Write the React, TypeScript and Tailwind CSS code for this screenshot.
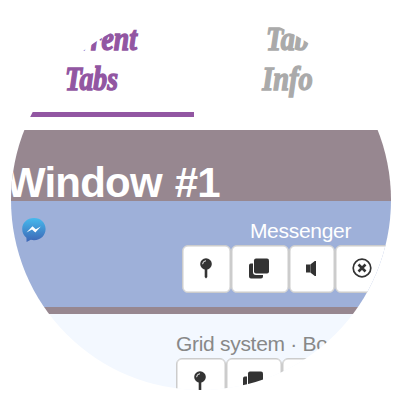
import type { ReactNode } from "react";

function PinIcon() {
  return (
    <svg width="12" height="21" viewBox="0 0 12 21" className="shrink-0">
      <path d="M4.7 10h2.6v9L6 20.5 4.7 19z" fill="#333" />
      <circle cx="6" cy="6" r="5.8" fill="#333" />
      <path d="M2.6 6.2A3.6 3.6 0 0 1 6 2.7" fill="none" stroke="#fff" strokeWidth="0.9" />
    </svg>
  );
}

function CopyIcon() {
  return (
    <svg width="20" height="21" viewBox="0 0 20 21" className="shrink-0">
      <path d="M1.8 5.5H4V14q0 3 3 3h7v1.500q0 2-2 2H2q-2 0-2-2V7.400q0-1.900 1.800-1.900z" fill="#333" />
      <rect x="5" y="0.5" width="15" height="15" rx="2" fill="#333" />
    </svg>
  );
}

function SpeakerIcon() {
  return (
    <svg width="10" height="15" viewBox="0 0 10 15" className="shrink-0">
      <path d="M0 3.500h4V11.500H0zM4.300 3.500L8.800 0H10v15H8.800L4.300 11.500z" fill="#333" />
    </svg>
  );
}

function CloseIcon() {
  return (
    <svg width="20" height="20" viewBox="0 0 20 20" className="shrink-0">
      <circle cx="10" cy="10" r="8.8" fill="none" stroke="#333" strokeWidth="1.7" />
      <path d="M6.500 6.500l7 7M13.500 6.500l-7 7" stroke="#333" strokeWidth="2.6" />
    </svg>
  );
}

function MessengerLogo() {
  return (
    <svg width="24" height="24" viewBox="0 0 24 24" className="shrink-0">
      <defs>
        <linearGradient id="bubble" x1="0" y1="0" x2="0" y2="1">
          <stop offset="0" stopColor="#46b9ed" />
          <stop offset="1" stopColor="#3d65b5" />
        </linearGradient>
      </defs>
      <path
        d="M12 0C5.200 0 .2 4.700.2 11c0 3.700 1.700 6.700 4.200 8.700L4.600 24l4.200-2.200c1 .3 2.100.4 3.200.4 6.800 0 11.600-5 11.600-11.200S18.800 0 12 0z"
        fill="url(#bubble)"
      />
      <path d="M4.500 14.500L10.500 8.200l3.300 3 5-2.700-5.500 6-3.300-3z" fill="#fff" />
    </svg>
  );
}

function ToolButton({ className, children }: { className: string; children: ReactNode }) {
  return (
    <button
      className={`flex h-12 shrink-0 items-center justify-center rounded-md border-[1.5px] border-[#ccc] bg-white pr-0.5 pb-0.5 ring-[0.5px] ring-[#ccc] ring-inset ${className}`}
    >
      {children}
    </button>
  );
}

export default function App() {
  return (
    <div className="h-[401px] w-[401px] overflow-hidden bg-white pl-[11px] pt-[10px] font-['Liberation_Sans',Arial,sans-serif]">
      <main className="flex h-[380px] w-[380px] flex-col overflow-hidden bg-white [clip-path:circle(190px_at_190px_190px)]">
        <nav className="flex h-[120px] shrink-0 font-['Liberation_Serif',serif] text-[33px] leading-10 font-bold italic">
          <div className="h-[107px] w-[183px] shrink-0 border-b-[5px] border-[#9256a2] pt-[9px] pr-[22px] text-center text-[#9256a2]">
            <div className="scale-x-[0.84] [-webkit-text-stroke:1.4px_#9256a2]">
              Current
              <br />
              Tabs
            </div>
          </div>
          <div className="h-[107px] w-[183px] shrink-0 pt-[9px] pl-[4px] text-center text-[#aaa]">
            <div className="scale-x-[0.86] [-webkit-text-stroke:1.4px_#aaa]">
              Tab
              <br />
              Info
            </div>
          </div>
        </nav>
        <header className="flex h-[71px] shrink-0 items-end bg-[#978790]">
          <h1 className="-mb-px -ml-[5px] text-[42px] leading-[39px] font-bold tracking-[-0.8px] [word-spacing:2px] whitespace-nowrap text-white">
            Window #1
          </h1>
        </header>
        <section className="flex h-[106px] shrink-0 bg-[#9eb0d9] pl-[10px]">
          <div className="w-[161px] shrink-0 pt-[17px] pl-px">
            <MessengerLogo />
          </div>
          <div className="w-[237px] shrink-0">
            <h2 className="h-11 pt-[18px] text-center text-[21px] leading-6 tracking-[-0.3px] text-white">
              Messenger
            </h2>
            <div className="flex">
              <ToolButton className="w-[49px]"><PinIcon /></ToolButton>
              <ToolButton className="w-[58px]"><CopyIcon /></ToolButton>
              <ToolButton className="w-[46px]"><SpeakerIcon /></ToolButton>
              <ToolButton className="w-[56px]"><CloseIcon /></ToolButton>
            </div>
          </div>
        </section>
        <div className="h-[7px] shrink-0 bg-[#978790]" />
        <section className="flex h-[76px] shrink-0 flex-col bg-[#f3f8ff] pl-[165px]">
          <h2 className="h-11 shrink-0 pt-[18px] text-[21px] leading-6 tracking-[-0.3px] whitespace-nowrap text-[#888]">
            Grid system · Bootstrap
          </h2>
          <div className="flex">
            <ToolButton className="w-[50px]"><PinIcon /></ToolButton>
            <ToolButton className="w-[56px]"><CopyIcon /></ToolButton>
            <ToolButton className="w-[120px]"><SpeakerIcon /></ToolButton>
          </div>
        </section>
      </main>
    </div>
  );
}
